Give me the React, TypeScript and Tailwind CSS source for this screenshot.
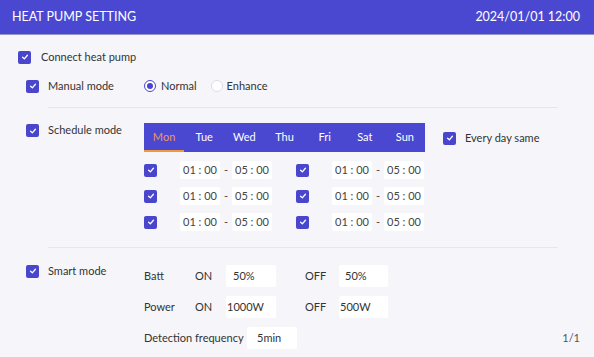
import React from "react";

const font = { fontFamily: 'Lato, "Noto Sans", sans-serif' };

function Check({ size = 13 }: { size?: number }) {
  return (
    <div
      className="flex items-center justify-center rounded-[2px] bg-[#4a46cc] shrink-0"
      style={{ width: size, height: size }}
    >
      <svg width="8" height="8" viewBox="0 0 10 10" fill="none">
        <path d="M2 5.3 L4.2 7.3 L8 2.8" stroke="white" strokeWidth="1.6" strokeLinecap="round" strokeLinejoin="round" />
      </svg>
    </div>
  );
}

function Radio({ on }: { on?: boolean }) {
  return on ? (
    <div className="w-[12px] h-[12px] rounded-full border border-[#4a46cc] flex items-center justify-center bg-white shrink-0">
      <div className="w-[6px] h-[6px] rounded-full bg-[#4a46cc]" />
    </div>
  ) : (
    <div className="w-[12px] h-[12px] rounded-full border border-[#dcdce4] bg-white shrink-0" />
  );
}

function TimeBox({ v }: { v: string }) {
  return (
    <div className="w-[40px] h-[18px] bg-white rounded-[2px] flex items-center justify-center text-[11px] text-[#444] whitespace-pre">
      {v}
    </div>
  );
}

function TimeHalf() {
  return (
    <div className="w-[152px] flex items-center">
      <Check />
      <div className="ml-[23px] flex items-center">
        <TimeBox v="01 : 00" />
        <div className="w-[12px] text-center text-[11px] text-[#444]">-</div>
        <TimeBox v="05 : 00" />
      </div>
    </div>
  );
}

function Input({ v, w = 50, pl = 7 }: { v: string; w?: number; pl?: number }) {
  return (
    <div
      className="h-[22px] bg-white rounded-[2px] flex items-center text-[11px] text-[#333] whitespace-nowrap"
      style={{ width: w, paddingLeft: pl }}
    >
      {v}
    </div>
  );
}

export default function App() {
  const days = ["Mon", "Tue", "Wed", "Thu", "Fri", "Sat", "Sun"];
  return (
    <div className="w-[594px] h-[357px] bg-[#f6f6fa] overflow-hidden text-[#333] whitespace-nowrap text-[11px]" style={font}>
      <div className="h-[35px] bg-[#4a48d0] flex items-center justify-between pl-[12px] pr-[14px] text-white text-[12.5px] border-b border-[#9896c8]">
        <span>HEAT PUMP SETTING</span>
        <span>2024/01/01 12:00</span>
      </div>

      <div className="flex flex-col">
        <div className="mt-[12px] h-[20px] pl-[18px] flex items-center">
          <Check />
          <span className="ml-[10px]">Connect heat pump</span>
        </div>

        <div className="mt-[9px] h-[20px] pl-[26px] flex items-center">
          <div className="w-[118px] flex items-center">
            <Check />
            <span className="ml-[9px]">Manual mode</span>
          </div>
          <Radio on />
          <span className="ml-[5px]">Normal</span>
          <div className="ml-[14px]">
            <Radio />
          </div>
          <span className="ml-[4px]">Enhance</span>
        </div>

        <div className="mt-[11px] ml-[48px] w-[510px] h-px bg-[#e6e6ee]" />

        <div className="mt-[15px] pl-[26px] flex">
          <div className="w-[118px] h-[15px] flex items-center">
            <Check />
            <span className="ml-[9px]">Schedule mode</span>
          </div>
          <div className="flex flex-col">
            <div className="flex items-start">
              <div className="w-[281px] h-[29px] bg-[#4a48d0] flex">
                {days.map((d, i) => (
                  <div
                    key={d}
                    className={
                      i === 0
                        ? "flex-1 flex items-center justify-center text-[#e79a5e] border-b-[2px] border-[#f09a3a] pt-[2px]"
                        : "flex-1 flex items-center justify-center text-white"
                    }
                  >
                    {d}
                  </div>
                ))}
              </div>
              <div className="ml-[18px] mt-[8px] h-[14px] flex items-center">
                <Check />
                <span className="ml-[9px]">Every day same</span>
              </div>
            </div>
            <div className="mt-[9px] flex flex-col gap-[8px]">
              {[0, 1, 2].map((r) => (
                <div key={r} className="h-[18px] flex items-center">
                  <TimeHalf />
                  <TimeHalf />
                </div>
              ))}
            </div>
          </div>
        </div>

        <div className="mt-[16px] ml-[48px] w-[510px] h-px bg-[#e6e6ee]" />

        <div className="mt-[16px] pl-[26px] pr-[14px] flex">
          <div className="w-[118px] h-[14px] flex items-center">
            <Check />
            <span className="ml-[9px]">Smart mode</span>
          </div>
          <div className="mt-[1px] flex flex-col gap-[9px]">
            <div className="h-[22px] flex items-center">
              <span className="w-[51px]">Batt</span>
              <span className="w-[31px]">ON</span>
              <Input v="50%" pl={7} />
              <span className="ml-[29px] w-[34px]">OFF</span>
              <Input v="50%" pl={6} w={49} />
            </div>
            <div className="h-[22px] flex items-center">
              <span className="w-[51px]">Power</span>
              <span className="w-[31px]">ON</span>
              <Input v="1000W" pl={1} />
              <span className="ml-[29px] w-[34px]">OFF</span>
              <Input v="500W" pl={1} w={49} />
            </div>
            <div className="h-[22px] flex items-center">
              <span className="w-[103px]">Detection frequency</span>
              <Input v="5min" pl={10} />
            </div>
          </div>
          <div className="ml-auto self-end h-[22px] flex items-center text-[#555]">1/1</div>
        </div>
      </div>
    </div>
  );
}
